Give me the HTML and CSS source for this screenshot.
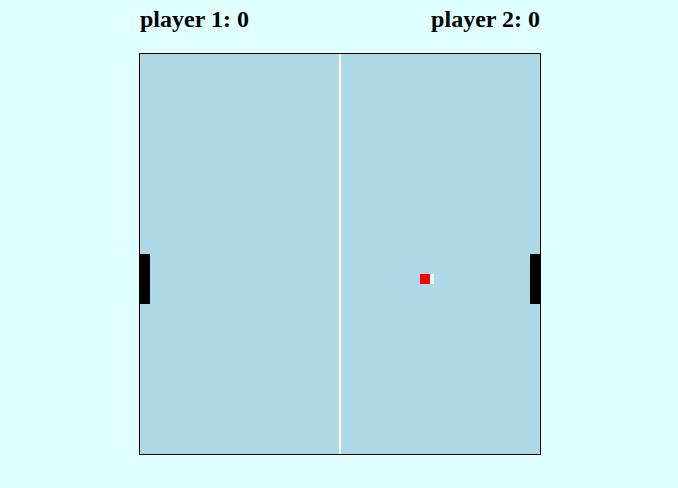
FILE: index.html
```html
<!DOCTYPE html>
<html lang="en">
<head>
    <meta charset="UTF-8">
    <meta name="viewport" content="width=device-width, initial-scale=1.0">
    <title>Pong</title>
    <link rel="stylesheet" href="styles.css">
</head>
<body>
    <div class="game">
        <div class="scores">
            <span id="score1">player 1: 0</span>
            <span id="score2">player 2: 0</span>
        </div>
        <div class="court">
            <div class="net"></div>
            <div class="paddle paddle-left"></div>
            <div class="paddle paddle-right"></div>
            <div class="trail"></div>
            <div class="ball"></div>
        </div>
    </div>
</body>
</html>
```

FILE: styles.css
```css
body {
    margin: 0;
    padding-left: 2px;
    background-color: lightcyan;
    font-family: 'Liberation Serif', 'Times New Roman', serif;
}
.game {
    width: 402px;
    margin: 0 auto;
}
.scores {
    display: flex;
    justify-content: space-between;
    margin-top: 6px;
    margin-bottom: 20px;
    padding: 0 1px 0 1px;
    font-size: 24px;
    font-weight: bold;
    line-height: 27px;
    color: #000;
}
.court {
    position: relative;
    width: 400px;
    height: 400px;
    background-color: lightblue;
    border: 1px solid #000;
}
.net {
    position: absolute;
    left: 199px;
    top: 0;
    width: 2px;
    height: 400px;
    background-color: #fff;
}
.paddle {
    position: absolute;
    top: 200px;
    width: 10px;
    height: 50px;
    background-color: #000;
}
.paddle-left {
    left: 0;
}
.paddle-right {
    left: 390px;
}
.ball {
    position: absolute;
    left: 280px;
    top: 220px;
    width: 10px;
    height: 10px;
    background-color: red;
}
.trail {
    position: absolute;
    left: 290px;
    top: 220px;
    width: 4px;
    height: 10px;
    background-color: lightcyan;
}
```
